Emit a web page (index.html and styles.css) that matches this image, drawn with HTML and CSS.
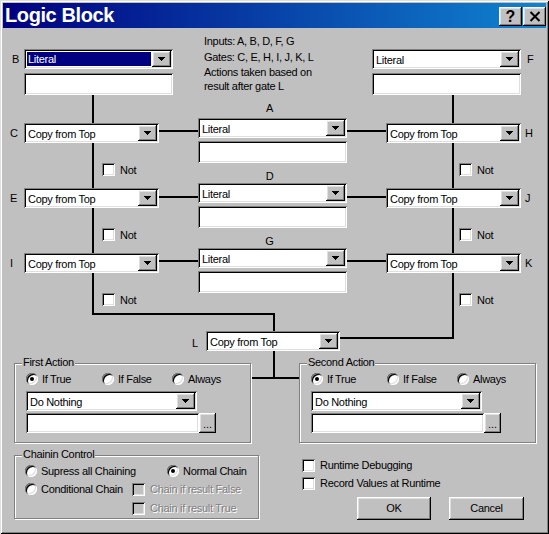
FILE: index.html
```html
<!DOCTYPE html>
<html lang="en">
<head>
<meta charset="UTF-8" />
<title>Logic Block</title>
<link rel="stylesheet" href="styles.css">
</head>
<body>
<div class="window" role="dialog" aria-label="Logic Block">
  <!-- connector wires of the gate diagram, drawn behind the controls -->
  <svg class="wires" width="549" height="534" aria-hidden="true">
    <g fill="none" stroke="#000" stroke-width="2" shape-rendering="crispEdges">
      <path d="M93 95V314H274V331"/>
      <path d="M453 95V338H340"/>
      <path d="M159 131H386M159 197H386M159 261H386"/>
      <path d="M274 351V378M251 378H299"/>
    </g>
  </svg>

  <div class="titlebar">
    <span class="title">Logic Block</span>
    <div class="caption-btns">
      <button class="cap-btn help" type="button">?</button>
      <button class="cap-btn close" type="button" aria-label="Close">
        <svg width="12" height="11" viewBox="0 0 12 11"><path d="M1.5 1L10.5 10M10.5 1L1.5 10" stroke="#000" stroke-width="2"/></svg>
      </button>
    </div>
  </div>

  <div class="client">
    <div class="diagram">
      <div class="col col-left">
        <div class="node top"><span class="pin pin-b">B</span><div class="combo combo-lg selected"><span class="combo-text">Literal</span><span class="drop"></span></div></div>
        <div class="edit edit-lg"></div>
        <div class="node"><span class="pin">C</span><div class="combo combo-md"><span class="combo-text">Copy from Top</span><span class="drop"></span></div></div>
        <label class="check not"><span class="box"></span>Not</label>
        <div class="node"><span class="pin">E</span><div class="combo combo-md"><span class="combo-text">Copy from Top</span><span class="drop"></span></div></div>
        <label class="check not"><span class="box"></span>Not</label>
        <div class="node"><span class="pin">I</span><div class="combo combo-md"><span class="combo-text">Copy from Top</span><span class="drop"></span></div></div>
        <label class="check not"><span class="box"></span>Not</label>
      </div>

      <div class="col col-mid">
        <div class="info">
          <p class="info-line">Inputs: A, B, D, F, G</p>
          <p class="info-line">Gates: C, E, H, I, J, K, L</p>
          <p class="info-note">Actions taken based on<br>result after gate L</p>
        </div>
        <div class="node-label first">A</div>
        <div class="combo combo-lg"><span class="combo-text">Literal</span><span class="drop"></span></div>
        <div class="edit edit-lg"></div>
        <div class="node-label">D</div>
        <div class="combo combo-lg"><span class="combo-text">Literal</span><span class="drop"></span></div>
        <div class="edit edit-lg"></div>
        <div class="node-label">G</div>
        <div class="combo combo-lg"><span class="combo-text">Literal</span><span class="drop"></span></div>
        <div class="edit edit-lg"></div>
      </div>

      <div class="col col-right">
        <div class="node top"><div class="combo combo-lg"><span class="combo-text">Literal</span><span class="drop"></span></div><span class="pin">F</span></div>
        <div class="edit edit-lg"></div>
        <div class="node"><div class="combo combo-md"><span class="combo-text">Copy from Top</span><span class="drop"></span></div><span class="pin">H</span></div>
        <label class="check not"><span class="box"></span>Not</label>
        <div class="node"><div class="combo combo-md"><span class="combo-text">Copy from Top</span><span class="drop"></span></div><span class="pin">J</span></div>
        <label class="check not"><span class="box"></span>Not</label>
        <div class="node"><div class="combo combo-md"><span class="combo-text">Copy from Top</span><span class="drop"></span></div><span class="pin">K</span></div>
        <label class="check not"><span class="box"></span>Not</label>
      </div>
    </div>

    <div class="gate">
      <span class="pin-l">L</span>
      <div class="combo combo-l"><span class="combo-text">Copy from Top</span><span class="drop"></span></div>
    </div>

    <div class="actions">
      <div class="group action">
        <span class="group-title">First Action</span>
        <div class="radios">
          <label class="radio on"><span class="dot"></span>If True</label>
          <label class="radio"><span class="dot"></span>If False</label>
          <label class="radio"><span class="dot"></span>Always</label>
        </div>
        <div class="combo combo-action"><span class="combo-text">Do Nothing</span><span class="drop"></span></div>
        <div class="edit-row"><div class="edit edit-action"></div><button class="btn ellipsis" type="button">...</button></div>
      </div>
      <div class="group action">
        <span class="group-title">Second Action</span>
        <div class="radios">
          <label class="radio on"><span class="dot"></span>If True</label>
          <label class="radio"><span class="dot"></span>If False</label>
          <label class="radio"><span class="dot"></span>Always</label>
        </div>
        <div class="combo combo-action"><span class="combo-text">Do Nothing</span><span class="drop"></span></div>
        <div class="edit-row"><div class="edit edit-action"></div><button class="btn ellipsis" type="button">...</button></div>
      </div>
    </div>

    <div class="bottom">
      <div class="group chain">
        <span class="group-title">Chainin Control</span>
        <div class="chain-row">
          <label class="radio radio-first"><span class="dot"></span>Supress all Chaining</label>
          <label class="radio on"><span class="dot"></span>Normal Chain</label>
        </div>
        <div class="chain-row">
          <label class="radio radio-cond"><span class="dot"></span>Conditional Chain</label>
          <label class="check disabled"><span class="box"></span>Chain if result False</label>
        </div>
        <div class="chain-row indent">
          <label class="check disabled"><span class="box"></span>Chain if result True</label>
        </div>
      </div>
      <div class="opts">
        <label class="check opt"><span class="box"></span>Runtime Debugging</label>
        <label class="check opt"><span class="box"></span>Record Values at Runtime</label>
        <div class="buttons">
          <button class="btn push ok" type="button">OK</button>
          <button class="btn push cancel" type="button">Cancel</button>
        </div>
      </div>
    </div>
  </div>
</div>
</body>
</html>
```

FILE: styles.css
```css
:root {
  --face: #c0c0c0;
  --shadow: #808080;
  --light: #dfdfdf;
  --dark: #000;
  --title-from: #000080;
  --title-to: #1084d0;
  --sunken: inset 1px 1px #808080, inset -1px -1px #fff, inset 2px 2px #000, inset -2px -2px #dfdfdf;
  --raised: inset -1px -1px #000, inset 1px 1px #fff, inset -2px -2px #808080, inset 2px 2px #dfdfdf;
}

* {
  box-sizing: border-box;
}

body {
  margin: 0;
  background: var(--face);
  color: #000;
  font-family: "Liberation Sans", Arial, sans-serif;
  font-size: 11px;
  letter-spacing: -0.3px;
}

p {
  margin: 0;
}

button {
  font: inherit;
  letter-spacing: inherit;
  color: inherit;
  border: none;
  padding: 0;
}

.window {
  position: relative;
  z-index: 0;
  width: 549px;
  height: 534px;
  padding: 3px;
  background: var(--face);
  box-shadow: inset 1px 1px var(--light), inset -1px -1px var(--dark), inset 2px 2px #fff, inset -2px -2px var(--shadow);
}

.wires {
  position: absolute;
  left: 0;
  top: 0;
  z-index: -1;
}

/* title bar */
.titlebar {
  display: flex;
  height: 25px;
  padding: 0 0 0 2px;
  background: linear-gradient(to right, var(--title-from), var(--title-to));
}

.title {
  flex: 1;
  color: #fff;
  font-weight: bold;
  font-size: 20px;
  line-height: 25px;
  letter-spacing: -0.4px;
}

.caption-btns {
  display: flex;
  gap: 1px;
  margin-top: 4px;
}

.cap-btn {
  width: 23px;
  height: 19px;
  display: flex;
  align-items: center;
  justify-content: center;
  background: var(--face);
  box-shadow: var(--raised);
}

.cap-btn.help {
  font-weight: bold;
  font-size: 16px;
  letter-spacing: 0;
  line-height: 19px;
}

/* shared controls */
.combo {
  display: flex;
  height: 20px;
  padding: 2px;
  background: #fff;
  box-shadow: var(--sunken);
}

.combo-text {
  flex: 1;
  padding-left: 2px;
  line-height: 18px;
  white-space: nowrap;
  overflow: hidden;
}

.combo.selected .combo-text {
  margin: 1px;
  padding: 1px 0 0 1px;
  line-height: 13px;
  background: var(--title-from);
  color: #fff;
}

.drop {
  width: 19px;
  height: 16px;
  flex: none;
  display: flex;
  align-items: center;
  justify-content: center;
  background: var(--face);
  box-shadow: var(--raised);
}

.drop::after {
  content: "";
  width: 7px;
  height: 4px;
  background:
    linear-gradient(#000, #000) 0 0 / 7px 1px no-repeat,
    linear-gradient(#000, #000) 1px 1px / 5px 1px no-repeat,
    linear-gradient(#000, #000) 2px 2px / 3px 1px no-repeat,
    linear-gradient(#000, #000) 3px 3px / 1px 1px no-repeat;
}

.combo-lg { width: 149px; }
.combo-md { width: 135px; }
.combo-l { width: 134px; }
.combo-action { width: 171px; }

.edit {
  background: #fff;
  box-shadow: var(--sunken);
}

.edit-lg {
  width: 149px;
  height: 22px;
}

.check,
.radio {
  display: flex;
  align-items: center;
  white-space: nowrap;
}

.check {
  gap: 5px;
}

.radio {
  gap: 4px;
}

.box {
  width: 13px;
  height: 13px;
  flex: none;
  background: #fff;
  box-shadow: var(--sunken);
}

.dot {
  position: relative;
  width: 12px;
  height: 12px;
  flex: none;
  border-radius: 50%;
  background: #fff;
  box-shadow: var(--sunken);
}

.radio.on .dot::after {
  content: "";
  position: absolute;
  left: 4px;
  top: 4px;
  width: 4px;
  height: 4px;
  border-radius: 50%;
  background: #000;
}

.check.disabled {
  color: var(--shadow);
  text-shadow: 1px 1px #fff;
}

.check.disabled .box {
  background: var(--face);
}

.btn {
  background: var(--face);
  box-shadow: var(--raised);
}

/* gate diagram */
.diagram {
  display: grid;
  grid-template-columns: 170px 25px 149px 25px 1fr;
  align-items: start;
}

.col-left { grid-column: 1; }
.col-mid { grid-column: 3; }
.col-right { grid-column: 5; }

.node {
  display: flex;
  align-items: center;
  height: 20px;
  margin-top: 12px;
}

.edit + .node {
  margin-top: 28px;
}

.node.top {
  margin-top: 21px;
}

.pin {
  width: 21px;
  padding-left: 7px;
}

.pin-b {
  padding-left: 9px;
}

.col-left .edit {
  margin: 4px 0 0 21px;
}

.col-right .edit {
  margin-top: 4px;
}

.col-right .node {
  padding-left: 14px;
}

.col-right .node.top {
  padding-left: 0;
}

.col-right .pin {
  width: auto;
  padding-left: 4px;
}

.col-right .node.top .pin {
  padding-left: 6px;
}

.not {
  height: 13px;
  margin-top: 20px;
  padding-left: 99px;
}

.col-right .not {
  padding-left: 87px;
}

.info {
  margin-top: 5px;
  padding-left: 6px;
}

.info-line {
  line-height: 16px;
}

.info-note {
  line-height: 14px;
}

.node-label {
  height: 13px;
  margin-top: 7px;
  padding-right: 6px;
  line-height: 13px;
  text-align: center;
}

.node-label.first {
  margin-top: 9px;
}

.node-label.first + .combo {
  margin-top: 3px;
}

.col-mid .combo + .edit {
  margin-top: 3px;
}

.gate {
  display: flex;
  height: 20px;
  margin-top: 25px;
  padding-left: 189px;
}

.pin-l {
  width: 14px;
  align-self: flex-end;
  margin-bottom: 1px;
  line-height: 13px;
}

/* group boxes */
.group {
  position: relative;
  border: 1px solid var(--shadow);
  box-shadow: inset 1px 1px #fff, 1px 1px #fff;
}

.group-title {
  position: absolute;
  left: 7px;
  top: -8px;
  padding: 0 1px;
  line-height: 13px;
  background: var(--face);
}

.actions {
  display: flex;
  margin-top: 12px;
  padding-left: 11px;
}

.action {
  width: 237px;
  height: 80px;
  padding: 8px 11px 0;
}

.action + .action {
  margin-left: 48px;
}

.radios {
  display: grid;
  grid-template-columns: 76px 70px auto;
  height: 13px;
  align-items: center;
}

.action .combo {
  margin-top: 6px;
}

.edit-row {
  display: flex;
  margin-top: 2px;
}

.edit-action {
  width: 173px;
  height: 20px;
}

.ellipsis {
  width: 17px;
  height: 20px;
  display: flex;
  align-items: flex-end;
  justify-content: center;
  padding-bottom: 3px;
  line-height: 11px;
  letter-spacing: 0;
}

.bottom {
  display: flex;
  margin-top: 12px;
  padding-left: 11px;
}

.chain {
  width: 245px;
  height: 64px;
  padding: 6px 0 0 10px;
}

.chain-row {
  display: flex;
  align-items: center;
  height: 18px;
}

.chain-row.indent {
  margin-top: 1px;
  padding-left: 107px;
}

.radio-first {
  width: 142px;
}

.radio-cond {
  width: 107px;
}

.opts {
  display: flex;
  flex-direction: column;
  margin-left: 43px;
  padding-top: 1px;
}

.opt {
  height: 18px;
}

.buttons {
  display: flex;
  gap: 18px;
  margin-top: 5px;
  padding-left: 55px;
}

.push {
  height: 23px;
  line-height: 23px;
  text-align: center;
}

.ok { width: 74px; }
.cancel { width: 75px; }
```
